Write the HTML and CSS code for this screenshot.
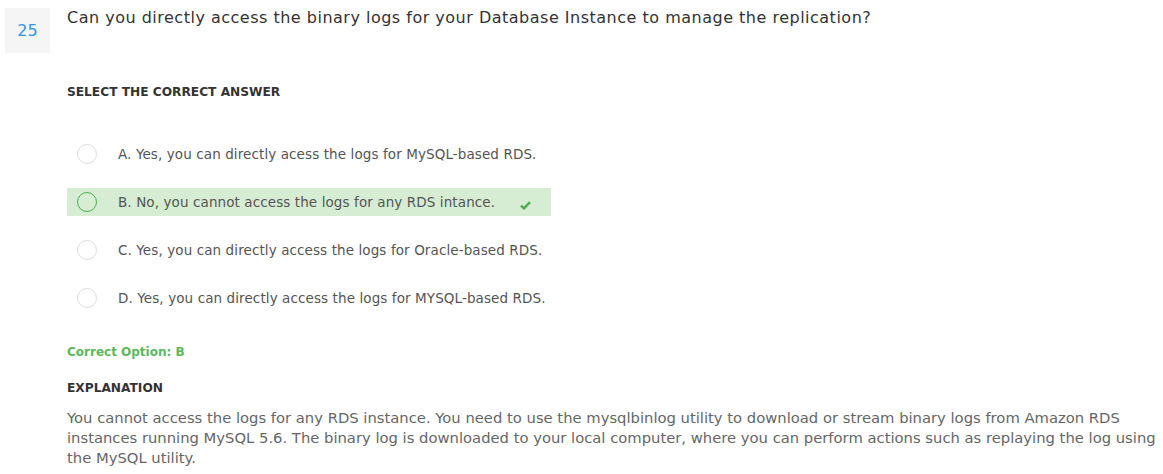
FILE: index.html
```html
<!DOCTYPE html>
<html>
<head>
<meta charset="utf-8">
<link rel="stylesheet" href="styles.css">
</head>
<body>
<div class="question">
  <div class="num">25</div>
  <div class="content">
    <h1 class="title">Can you directly access the binary logs for your Database Instance to manage the replication?</h1>
    <h2 class="label select">SELECT THE CORRECT ANSWER</h2>
    <ul class="options">
      <li class="option"><span class="radio"></span><span class="otext">A. Yes, you can directly acess the logs for MySQL-based RDS.</span></li>
      <li class="option correct"><span class="radio"></span><span class="otext">B. No, you cannot access the logs for any RDS intance.</span>
        <svg class="check" width="11" height="9" viewBox="0 0 11 9"><path d="M1 4.6 L4 7.4 L10 1.2" fill="none" stroke="#4cae4c" stroke-width="2.4"/></svg>
      </li>
      <li class="option"><span class="radio"></span><span class="otext">C. Yes, you can directly access the logs for Oracle-based RDS.</span></li>
      <li class="option"><span class="radio"></span><span class="otext">D. Yes, you can directly access the logs for MYSQL-based RDS.</span></li>
    </ul>
    <p class="answer">Correct Option: B</p>
    <h2 class="label">EXPLANATION</h2>
    <p class="explain">You cannot access the logs for any RDS instance. You need to use the mysqlbinlog utility to download or stream binary logs from Amazon RDS instances running MySQL 5.6. The binary log is downloaded to your local computer, where you can perform actions such as replaying the log using the MySQL utility.</p>
  </div>
</div>
</body>
</html>
```
FILE: styles.css
```css
body {
  margin: 0;
  font-family: "DejaVu Sans", "Liberation Sans", sans-serif;
  color: #333;
  background: #fff;
}
.question {
  display: flex;
  padding: 8px 0 0 5px;
}
.num {
  width: 45px;
  height: 45px;
  background: #f5f5f5;
  color: #2f96e8;
  font-size: 16px;
  display: flex;
  align-items: center;
  justify-content: center;
  flex-shrink: 0;
}
.content {
  margin-left: 17px;
  flex: 1;
  padding-right: 4px;
}
.title {
  margin: 0;
  font-size: 16px;
  font-weight: 400;
  line-height: 20px;
  color: #333;
  letter-spacing: 0.5px;
}
.label {
  margin: 0;
  font-size: 12.2px;
  font-weight: 700;
  color: #333;
  line-height: 16px;
}
.select {
  margin-top: 56px;
}
.options {
  list-style: none;
  margin: 40px 0 0 0;
  padding: 0;
  width: 484px;
}
.option {
  display: flex;
  align-items: center;
  height: 28px;
  margin-bottom: 20px;
  padding-left: 10px;
}
.radio {
  width: 20px;
  height: 20px;
  border: 1px solid #ddd;
  border-radius: 50%;
  box-sizing: border-box;
  flex-shrink: 0;
}
.otext {
  margin-left: 21px;
  font-size: 13.5px;
  color: #555;
  letter-spacing: 0.1px;
}
.correct {
  background: #d6ecd3;
}
.correct .radio {
  border-color: #49b34a;
}
.check {
  margin-left: 25px;
  margin-top: 7px;
}
.answer {
  margin: 32px 0 0 0;
  font-size: 12px;
  font-weight: 600;
  color: #5cb85c;
  line-height: 16px;
}
.answer + .label {
  margin-top: 20px;
}
.explain {
  margin: 12px 0 0 0;
  font-size: 14.78px;
  line-height: 20px;
  color: #666;
}
```
